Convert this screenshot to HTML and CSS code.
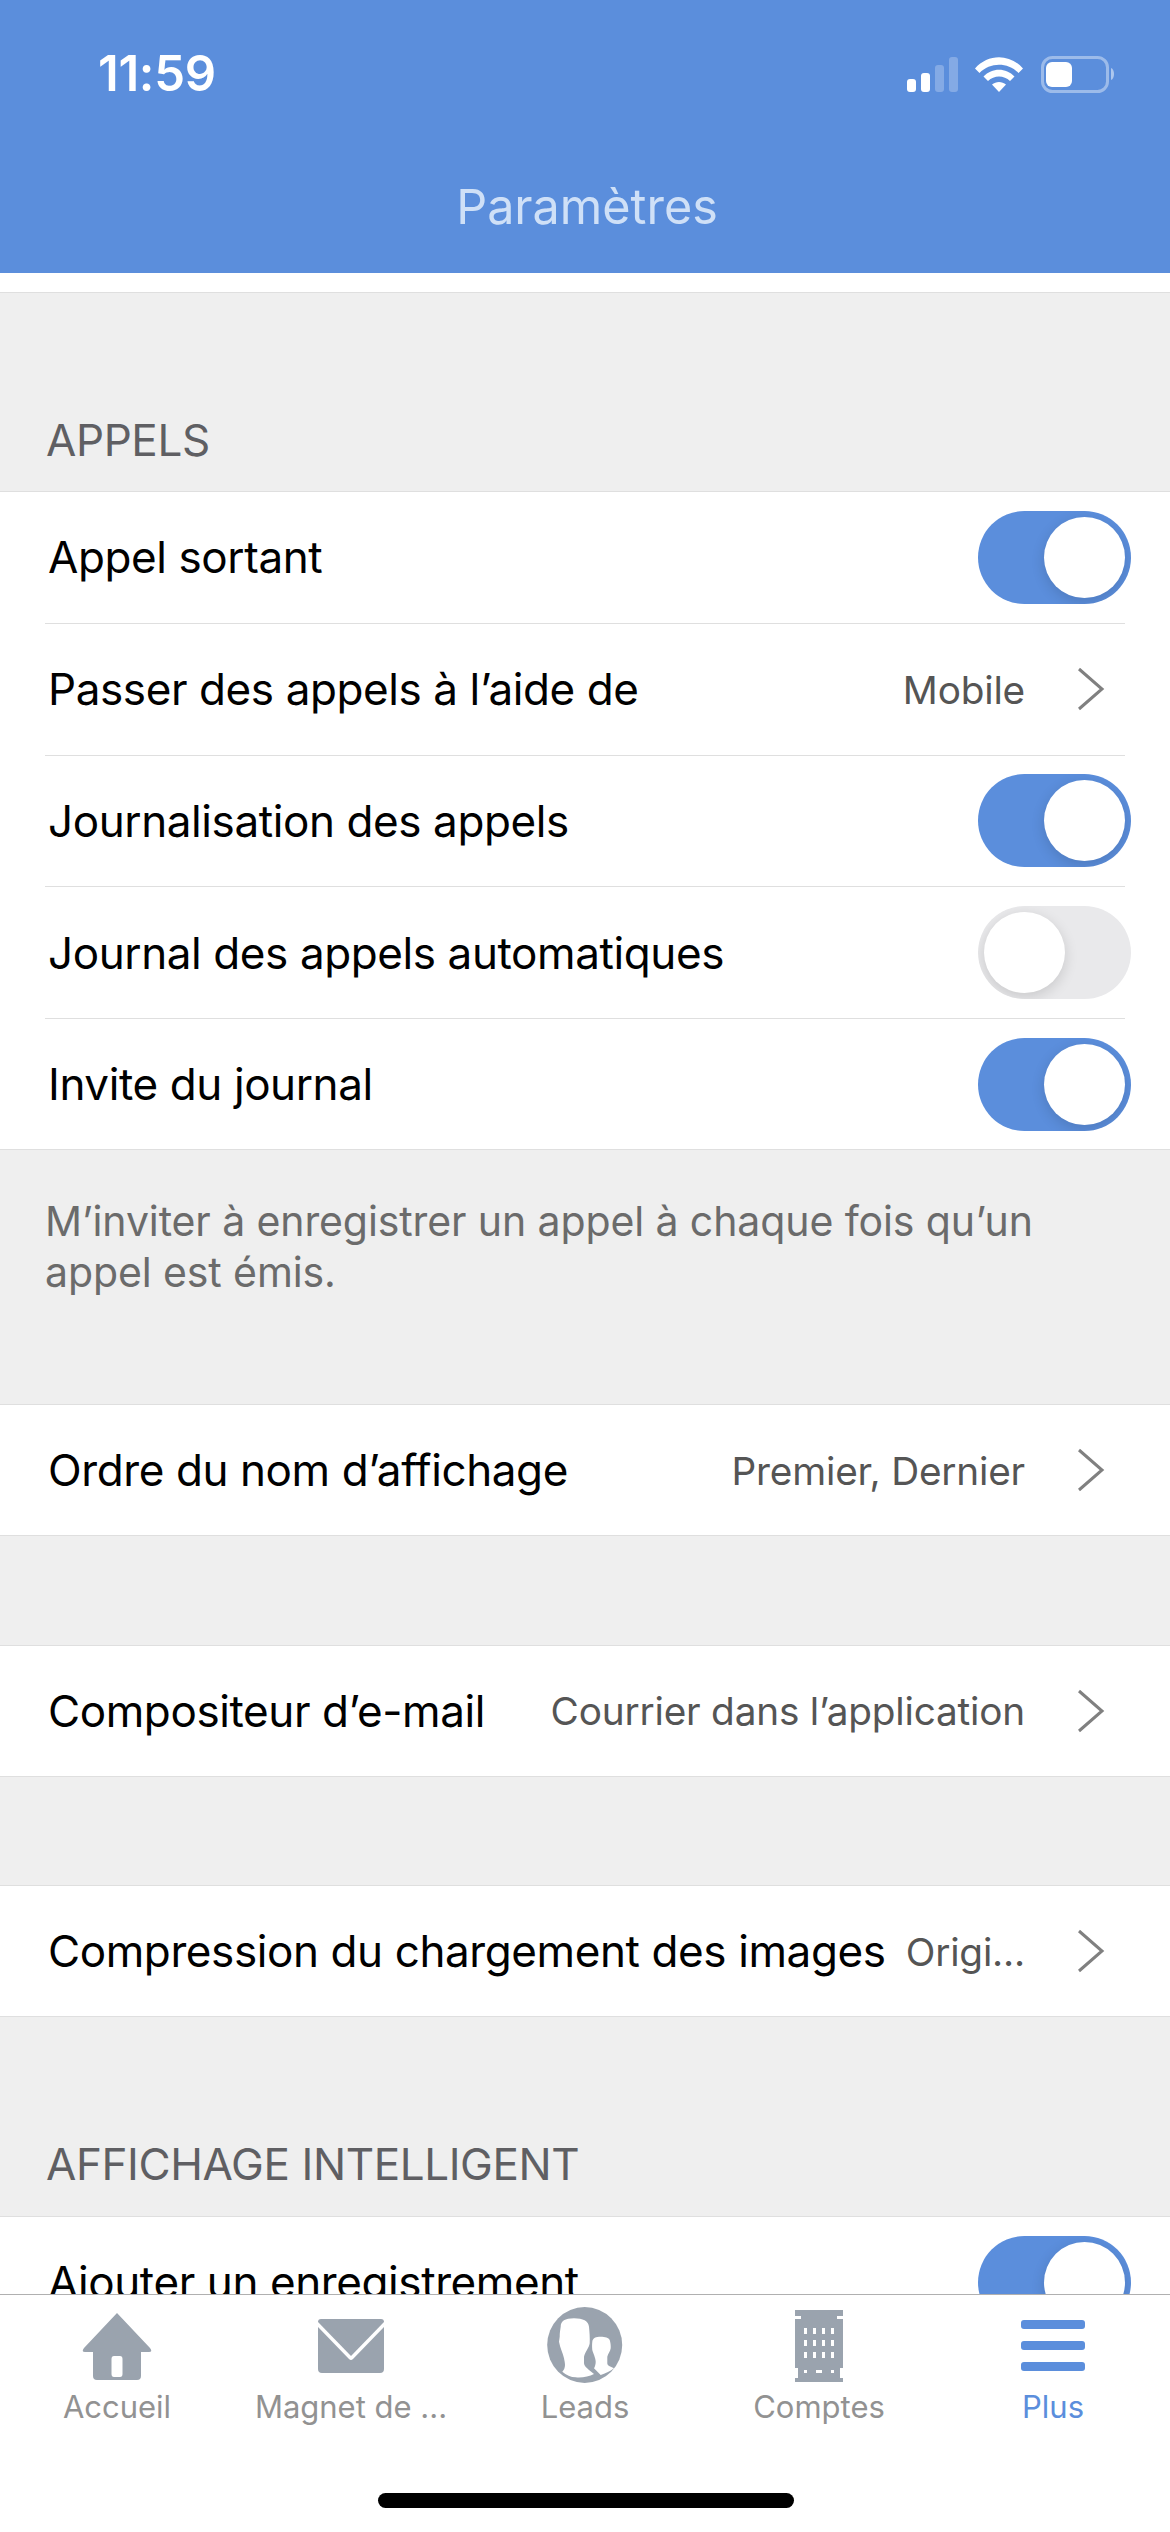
FILE: index.html
```html
<!DOCTYPE html>
<html lang="fr">
<head>
<meta charset="utf-8">
<title>Paramètres</title>
<link rel="stylesheet" href="styles.css">
</head>
<body>
<div class="app">
  <header class="header">
    <div class="status">
      <span class="time">11:59</span>
      <svg class="status-icons" width="216" height="38" viewBox="0 0 216 38">
        <rect x="0" y="24" width="9" height="13" rx="3" fill="#fff"/>
        <rect x="14" y="18" width="9" height="19" rx="3" fill="#fff"/>
        <rect x="28" y="10" width="9" height="27" rx="3" fill="#fff" opacity=".25"/>
        <rect x="42" y="2" width="9" height="35" rx="3" fill="#fff" opacity=".25"/>
        <path d="M68 13.5 C 81 -1.5 103 -1.5 116 13.5 L 111.5 18 C 101 7 83 7 72.5 18 Z" fill="#fff"/>
        <path d="M76.5 21.5 C 85 12.5 99 12.5 107.5 21.5 L 103 26 C 97 20 87 20 81 26 Z" fill="#fff"/>
        <path d="M85 29.5 C 89 26 95 26 99 29.5 L 92 37 Z" fill="#fff"/>
        <rect x="135.5" y="2.5" width="65" height="34" rx="10" fill="none" stroke="#fff" stroke-opacity=".4" stroke-width="3"/>
        <rect x="139" y="7" width="26" height="25" rx="6" fill="#fff"/>
        <path d="M204 13 C 208 14 208 24 204 25 Z" fill="#fff" fill-opacity=".5"/>
      </svg>
    </div>
    <h1 class="title">Paramètres</h1>
  </header>

  <main class="scroll">
    <div class="strip"></div>

    <h2 class="section-label first">APPELS</h2>
    <section class="card">
      <div class="row"><span class="row-name">Appel sortant</span><span class="toggle on"><span class="knob"></span></span></div>
      <div class="row"><span class="row-name">Passer des appels à l’aide de</span><span class="row-value">Mobile</span><svg class="chevron" viewBox="0 0 28 44"><path d="M2 2 L25 22 L2 42"/></svg></div>
      <div class="row"><span class="row-name">Journalisation des appels</span><span class="toggle on"><span class="knob"></span></span></div>
      <div class="row"><span class="row-name">Journal des appels automatiques</span><span class="toggle"><span class="knob"></span></span></div>
      <div class="row"><span class="row-name">Invite du journal</span><span class="toggle on"><span class="knob"></span></span></div>
    </section>
    <p class="note">M’inviter à enregistrer un appel à chaque fois qu’un appel est émis.</p>

    <section class="card">
      <div class="row"><span class="row-name">Ordre du nom d’affichage</span><span class="row-value">Premier, Dernier</span><svg class="chevron" viewBox="0 0 28 44"><path d="M2 2 L25 22 L2 42"/></svg></div>
    </section>
    <div class="gap"></div>
    <section class="card">
      <div class="row"><span class="row-name">Compositeur d’e-mail</span><span class="row-value">Courrier dans l’application</span><svg class="chevron" viewBox="0 0 28 44"><path d="M2 2 L25 22 L2 42"/></svg></div>
    </section>
    <div class="gap"></div>
    <section class="card">
      <div class="row"><span class="row-name">Compression du chargement des images</span><span class="row-value">Origi...</span><svg class="chevron" viewBox="0 0 28 44"><path d="M2 2 L25 22 L2 42"/></svg></div>
    </section>

    <h2 class="section-label">AFFICHAGE INTELLIGENT</h2>
    <section class="card">
      <div class="row"><span class="row-name">Ajouter un enregistrement</span><span class="toggle on"><span class="knob"></span></span></div>
    </section>
  </main>

  <nav class="tabbar">
    <div class="tabs">
      <div class="tab">
        <svg class="tab-icon" width="76" height="78" viewBox="0 0 76 78">
          <path fill="#9aa3ae" fill-rule="evenodd" d="M38 8 L71 43 Q74 47 70 47 L62 47 V71 Q62 75 58 75 H18 Q14 75 14 71 V47 H6 Q2 47 5 43 Z M32.5 54 Q32.5 51 35 51 H41 Q43.5 51 43.5 54 V69 Q43.5 72 41 72 H35 Q32.5 72 32.5 69 Z"/>
        </svg>
        <span class="tab-label">Accueil</span>
      </div>
      <div class="tab">
        <svg class="tab-icon" width="68" height="78" viewBox="0 0 68 78">
          <g transform="translate(0,2)">
            <path fill="#9aa3ae" d="M4 12 H64 Q67 12 67 15 L34 49 L1 15 Q1 12 4 12 Z"/>
            <path fill="#9aa3ae" d="M1 20 L32 52 Q34 54 36 52 L67 20 V62 Q67 66 63 66 H5 Q1 66 1 62 Z"/>
          </g>
        </svg>
        <span class="tab-label">Magnet de ...</span>
      </div>
      <div class="tab">
        <svg class="tab-icon" width="78" height="80" viewBox="0 0 78 80">
          <ellipse cx="38.7" cy="40" rx="37.5" ry="38" fill="#9aa3ae"/>
          <path fill="#fff" d="M28 13.3 C19 13.3 14.7 16 14.7 21.7 C14.2 25 13.7 28 13.7 31.7 L13 36.7 C14 43 17 48 18 53.3 C18.5 56 19 58 19 60 C19 62.5 18 65 16.3 66.7 C20 70 25 72.3 29.7 72.3 C36 73 43 71.5 48 69 L43 65 C40.5 63 38 60.5 38 58.3 L38 51.7 C39 47 43 43 43.7 38.3 C44 33 43.5 27 43 21.7 C42.5 16 37 13.3 28 13.3 Z"/>
          <path fill="#fff" d="M54.7 31.7 C50 31.7 46.6 33 46.3 36.7 C46 39 46 42 46.3 45 C47 48 49.7 53 49.7 56.7 C49.7 59 49 61.5 48 63.3 L54.7 70 C59 68.5 64 66.5 68 63.3 C65.5 62 61.3 61 61.3 58.3 L61.3 51.7 C62 48.5 64.3 46.5 64.7 43.3 C64.9 40 64.5 38 63.7 35 C62.8 32.5 59 31.7 54.7 31.7 Z"/>
        </svg>
        <span class="tab-label tab-label-tight">Leads</span>
      </div>
      <div class="tab">
        <svg class="tab-icon" width="48" height="78" viewBox="0 0 48 78">
          <path fill="#9aa3ae" fill-rule="evenodd" d="M0 5 H48 V11 H42 V14 H48 V63 H45 V73 H48 V77 H0 V73 H3 V63 H0 V14 H6 V11 H0 Z
            M9 23 h3 v6 h-3 Z M18 23 h3 v6 h-3 Z M27 23 h3 v6 h-3 Z M36 23 h3 v6 h-3 Z
            M9 35 h3 v6 h-3 Z M18 35 h3 v6 h-3 Z M27 35 h3 v6 h-3 Z M36 35 h3 v6 h-3 Z
            M9 47 h3 v6 h-3 Z M18 47 h3 v6 h-3 Z M27 47 h3 v6 h-3 Z M36 47 h3 v6 h-3 Z
            M9 65 h3 v3 h-3 Z M21 65 h6 v3 h-6 Z M36 65 h3 v3 h-3 Z"/>
        </svg>
        <span class="tab-label">Comptes</span>
      </div>
      <div class="tab active">
        <svg class="tab-icon" width="64" height="78" viewBox="0 0 64 78">
          <rect x="0" y="15" width="64" height="9" rx="3" fill="#5b8edc"/>
          <rect x="0" y="36" width="64" height="9" rx="3" fill="#5b8edc"/>
          <rect x="0" y="57" width="64" height="9" rx="3" fill="#5b8edc"/>
        </svg>
        <span class="tab-label">Plus</span>
      </div>
    </div>
    <div class="home-indicator"></div>
  </nav>
</div>
</body>
</html>
```

FILE: styles.css
```css
* { box-sizing: border-box; }
html, body { margin: 0; padding: 0; }
body { font-family: Inter, Roboto, "Liberation Sans", sans-serif; background: #fff; }

.app { width: 1170px; height: 2532px; display: flex; flex-direction: column; overflow: hidden; }

.header { flex: 0 0 273px; background: #5b8edc; padding: 0 47px 0 98px; }
.status { display: flex; justify-content: space-between; align-items: flex-start; padding-top: 43px; height: 176px; }
.time { color: #fff; font-size: 49px; font-weight: 600; line-height: 62px; letter-spacing: -0.3px; }
.status-icons { margin-top: 12px; }
.title { margin: 0 0 0 -96px; width: 1170px; text-align: center; color: #cfe0f7; font-size: 48.5px; font-weight: 400; line-height: 62px; }

.scroll { flex: 1 1 0; min-height: 0; overflow: hidden; background: #efefef; }
.strip { height: 20px; background: #fff; border-bottom: 1px solid #dfdfdf; }

.section-label { margin: 0; padding: 0 46px 26px; height: 199px; display: flex; align-items: flex-end; font-size: 44px; font-weight: 400; line-height: 52px; color: #5f5f63; letter-spacing: -0.4px; }
.section-label.first { height: 198px; padding-bottom: 25px; }

.card { background: #fff; border-top: 1px solid #dfdfdf; border-bottom: 1px solid #dfdfdf; }

.row { height: 131.8px; margin: 0 45px; display: flex; align-items: center; border-bottom: 1px solid #dfdfdf; }
.row:last-child { border-bottom: 0; height: 130px; }
.row-name { flex: 1 1 auto; padding-left: 3px; font-size: 44px; line-height: 54px; color: #000; white-space: nowrap; letter-spacing: -0.4px; }
.row-value { font-size: 38.75px; color: #555; white-space: nowrap; margin-right: 52px; letter-spacing: -0.2px; }
.chevron { flex: none; width: 28px; height: 44px; margin-right: 20px; }
.chevron path { fill: none; stroke: #808080; stroke-width: 3; }

.toggle { flex: none; width: 153px; height: 93px; border-radius: 47px; background: #e9e9eb; margin-right: -6px; padding: 6px; display: flex; justify-content: flex-start; overflow: hidden; }
.toggle.on { background: #5b8edc; justify-content: flex-end; }
.knob { width: 81px; height: 81px; border-radius: 50%; background: #fff; box-shadow: 0 4px 14px rgba(0, 0, 0, .14); }

.note { margin: 0; padding: 46px 100px 0 45px; height: 254px; font-size: 41px; line-height: 51px; color: #6b6b6b; letter-spacing: -0.1px; }
.gap { height: 108.5px; }

.tabbar { flex: 0 0 238px; background: #fff; border-top: 1px solid #b0b0b0; display: flex; flex-direction: column; position: relative; }
.tabs { display: grid; grid-template-columns: repeat(5, 234px); }
.tab { display: flex; flex-direction: column; align-items: center; padding-top: 10px; }
.tab-icon { display: block; }
.tab-label { margin-top: 4px; font-size: 31px; line-height: 40px; color: #929292; white-space: nowrap; }
.tab-label-tight { margin-top: 2px; }
.tab.active .tab-label { color: #5b8edc; }
.home-indicator { position: absolute; left: 378px; top: 198px; width: 416px; height: 15px; border-radius: 8px; background: #000; }
```
